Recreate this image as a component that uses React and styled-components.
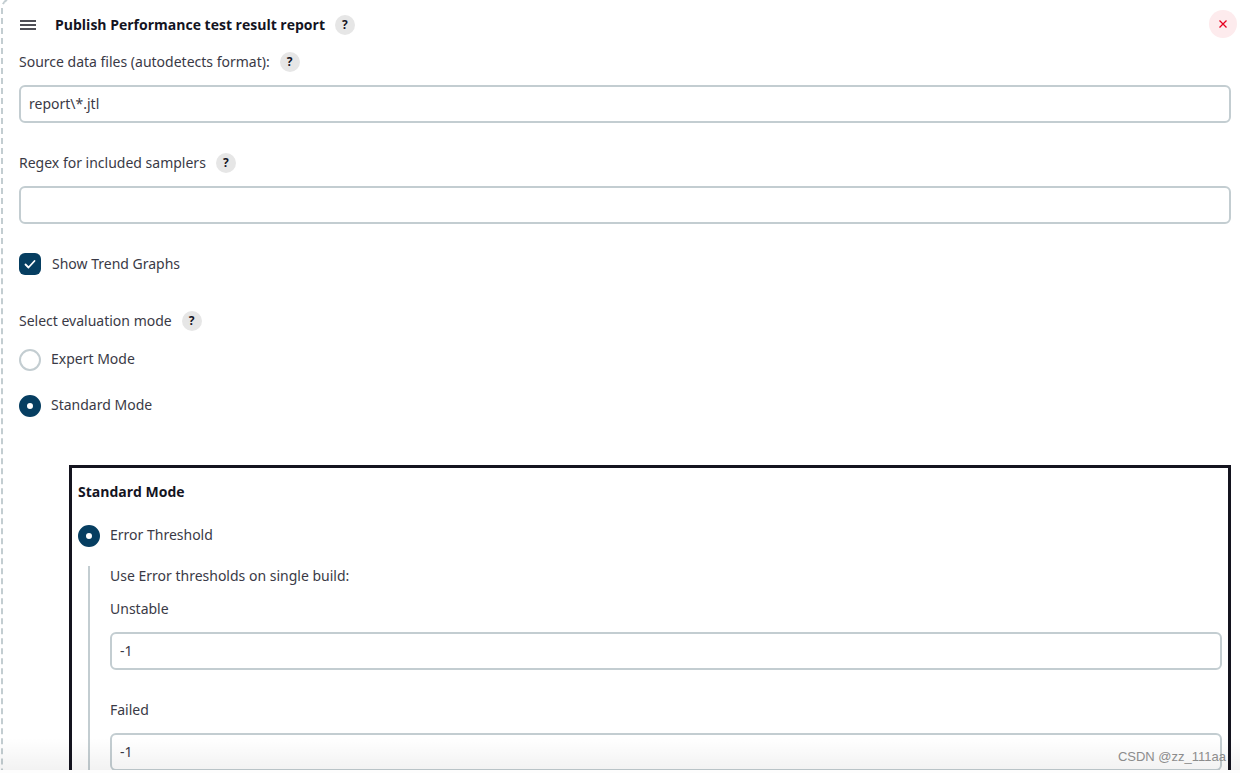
import React, { useState } from "react";
import styled, { createGlobalStyle } from "styled-components";

export default function App() {
  const [files, setFiles] = useState("report\\*.jtl");
  const [regex, setRegex] = useState("");
  const [trend, setTrend] = useState(true);
  const [mode, setMode] = useState("standard");
  const [unstable, setUnstable] = useState("-1");
  const [failed, setFailed] = useState("-1");

  return (
    <>
      <GlobalStyle />
      <Page>
        <Card>
          <Header>
            <DragHandle type="button" aria-label="Drag">
              <svg width="16" height="10" viewBox="0 0 16 10" aria-hidden="true">
                <path d="M0 1h16M0 5h16M0 9h16" stroke="#14141f" strokeWidth="1.6" />
              </svg>
            </DragHandle>
            <Title>Publish Performance test result report</Title>
            <Help type="button" aria-label="Help">?</Help>
            <DeleteButton type="button" aria-label="Delete">
              <svg width="8" height="8" viewBox="0 0 8 8" aria-hidden="true">
                <path d="M.5.5l7 7M7.5.5l-7 7" stroke="#e6001f" strokeWidth="1.3" />
              </svg>
            </DeleteButton>
          </Header>
          <Body>
            <Field>
              <LabelRow>
                <label htmlFor="files">Source data files (autodetects format):</label>
                <Help type="button" aria-label="Help">?</Help>
              </LabelRow>
              <TextInput
                id="files"
                value={files}
                onChange={(e) => setFiles(e.target.value)}
              />
            </Field>
            <Field>
              <LabelRow>
                <label htmlFor="regex">Regex for included samplers</label>
                <Help type="button" aria-label="Help">?</Help>
              </LabelRow>
              <TextInput
                id="regex"
                value={regex}
                onChange={(e) => setRegex(e.target.value)}
              />
            </Field>
            <CheckRow>
              <Checkbox
                type="checkbox"
                checked={trend}
                onChange={(e) => setTrend(e.target.checked)}
              />
              Show Trend Graphs
            </CheckRow>
            <LabelRow id="mode-label">
              Select evaluation mode
              <Help type="button" aria-label="Help">?</Help>
            </LabelRow>
            <RadioGroup role="radiogroup" aria-labelledby="mode-label">
              <RadioRow>
                <Radio
                  type="radio"
                  name="mode"
                  checked={mode === "expert"}
                  onChange={() => setMode("expert")}
                />
                <span>Expert Mode</span>
              </RadioRow>
              <RadioRow>
                <Radio
                  type="radio"
                  name="mode"
                  checked={mode === "standard"}
                  onChange={() => setMode("standard")}
                />
                <span>Standard Mode</span>
              </RadioRow>
            </RadioGroup>
            <ModeBox>
              <Title>Standard Mode</Title>
              <RadioRow>
                <Radio type="radio" name="threshold" defaultChecked />
                <span>Error Threshold</span>
              </RadioRow>
              <Nested>
                <Note>Use Error thresholds on single build:</Note>
                <Field>
                  <LabelRow>
                    <label htmlFor="unstable">Unstable</label>
                  </LabelRow>
                  <TextInput
                    id="unstable"
                    value={unstable}
                    onChange={(e) => setUnstable(e.target.value)}
                  />
                </Field>
                <Field>
                  <LabelRow>
                    <label htmlFor="failed">Failed</label>
                  </LabelRow>
                  <TextInput
                    id="failed"
                    value={failed}
                    onChange={(e) => setFailed(e.target.value)}
                  />
                </Field>
              </Nested>
            </ModeBox>
          </Body>
        </Card>
        <Shade />
        <Watermark>CSDN @zz_111aa</Watermark>
      </Page>
    </>
  );
}

const GlobalStyle = createGlobalStyle`
  * {
    box-sizing: border-box;
  }
  body {
    margin: 0;
    background: #fdfdfd;
    color: #3a3a46;
    font-family: "Noto Sans", "Open Sans", sans-serif;
    font-size: 14px;
    line-height: 20px;
  }
  button,
  input {
    font: inherit;
    color: inherit;
    margin: 0;
  }
`;

const Page = styled.main`
  position: relative;
  height: calc(100vh - 3px);
  overflow: hidden;
  background: #fff;
`;

const Card = styled.section`
  margin: -2px 0 0 1px;
  border: 2px dashed #c3cdd1;
  border-width: 2px 0 0 2px;
  border-top-left-radius: 10px;
`;

const Header = styled.header`
  display: flex;
  align-items: center;
  height: 40px;
  padding: 10px 3px 0 17px;
`;

const DragHandle = styled.button`
  display: flex;
  width: 35px;
  padding: 0;
  border: 0;
  background: none;
  cursor: move;
`;

const Title = styled.h2`
  margin: 0;
  font-family: "Open Sans", "Noto Sans", sans-serif;
  font-size: 14px;
  font-weight: 700;
  line-height: 20px;
  color: #14141f;
`;

const Help = styled.button`
  width: 20px;
  height: 20px;
  margin-left: 10px;
  padding: 0;
  border: 0;
  border-radius: 50%;
  background: #e6e6e6;
  color: #14141f;
  font-size: 12px;
  font-weight: 700;
  line-height: 20px;
  cursor: pointer;
`;

const DeleteButton = styled.button`
  display: flex;
  align-items: center;
  align-self: flex-start;
  justify-content: center;
  width: 28px;
  height: 28px;
  margin-left: auto;
  padding: 0;
  border: 0;
  border-radius: 50%;
  background: #fdebed;
  cursor: pointer;
`;

const Body = styled.div`
  padding: 12px 9px 0 16px;
`;

const Field = styled.div`
  margin-bottom: 30px;
`;

const LabelRow = styled.div`
  display: flex;
  align-items: center;
  height: 20px;
`;

const TextInput = styled.input`
  display: block;
  width: 100%;
  height: 38px;
  margin-top: 13px;
  padding: 0 8px 2px;
  border: 2px solid #c3cdd1;
  border-radius: 6px;
  background: #fff;
`;

const CheckRow = styled.label`
  display: flex;
  align-items: center;
  gap: 11px;
  height: 20px;
  margin-bottom: 37px;
`;

const Checkbox = styled.input`
  appearance: none;
  flex: none;
  width: 22px;
  height: 22px;
  border: 2px solid #c3cdd1;
  border-radius: 6px;
  &:checked {
    border: 0;
    background: #063e61
      url("data:image/svg+xml,%3Csvg xmlns='http://www.w3.org/2000/svg' viewBox='0 0 22 22'%3E%3Cpath d='M6.5 11.5l3 3 6-6.5' fill='none' stroke='white' stroke-width='1.8' stroke-linecap='round' stroke-linejoin='round'/%3E%3C/svg%3E");
  }
`;

const RadioGroup = styled.div`
  display: grid;
  gap: 24px;
  margin: 18px 0 48px;
`;

const RadioRow = styled.label`
  display: flex;
  align-items: flex-start;
  gap: 10px;
  height: 22px;
`;

const Radio = styled.input`
  appearance: none;
  flex: none;
  width: 22px;
  height: 22px;
  border: 2px solid #c3cdd1;
  border-radius: 50%;
  background: #fff;
  &:checked {
    border: 8px solid #063e61;
  }
`;

const ModeBox = styled.section`
  margin-left: 50px;
  padding: 14px 6px 0;
  border: 3px solid #14141f;
  ${RadioRow} {
    margin-top: 23px;
  }
`;

const Nested = styled.div`
  margin: 19px 0 0 10px;
  padding-left: 20px;
  border-left: 2px solid #c3cdd1;
`;

const Note = styled.p`
  margin: 0 0 13px;
`;

/* fade over the bottom edge of the page */
const Shade = styled.div`
  position: absolute;
  inset: auto 0 0;
  height: 32px;
  background: linear-gradient(rgba(0, 0, 0, 0), rgba(0, 0, 0, 0.05));
  pointer-events: none;
`;

const Watermark = styled.div`
  position: absolute;
  right: 14px;
  bottom: 3px;
  color: #8c8c8c;
  font-family: "Liberation Sans", Arial, sans-serif;
  font-size: 13px;
`;
